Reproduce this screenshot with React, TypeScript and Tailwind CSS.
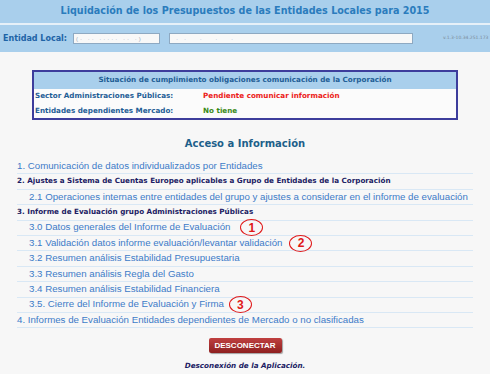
import React from "react";

const verdana = { fontFamily: '"DejaVu Sans", Verdana, sans-serif' };
const arial = { fontFamily: '"Liberation Sans", Arial, sans-serif' };

function Circle({ n, ml }: { n: string; ml: string }) {
  return (
    <span
      className={`inline-flex items-center justify-center w-[23px] h-[17px] rounded-[50%] border-[1.5px] border-[#e01818] text-[#e01818] font-bold text-[12px] leading-none align-middle -my-[2px] ${ml}`}
      style={arial}
    >
      {n}
    </span>
  );
}

type Row = { text: string; kind: "link" | "sub" | "head"; circle?: { n: string; ml: string } };

const rows: Row[] = [
  { text: "1. Comunicación de datos individualizados por Entidades", kind: "link" },
  { text: "2. Ajustes a Sistema de Cuentas Europeo aplicables a Grupo de Entidades de la Corporación", kind: "head" },
  { text: "2.1 Operaciones internas entre entidades del grupo y ajustes a considerar en el informe de evaluación", kind: "sub" },
  { text: "3. Informe de Evaluación grupo Administraciones Públicas", kind: "head" },
  { text: "3.0 Datos generales del Informe de Evaluación", kind: "sub", circle: { n: "1", ml: "ml-[10px]" } },
  { text: "3.1 Validación datos informe evaluación/levantar validación", kind: "sub", circle: { n: "2", ml: "ml-[7px]" } },
  { text: "3.2 Resumen análisis Estabilidad Presupuestaria", kind: "sub" },
  { text: "3.3 Resumen análisis Regla del Gasto", kind: "sub" },
  { text: "3.4 Resumen análisis Estabilidad Financiera", kind: "sub" },
  { text: "3.5. Cierre del Informe de Evaluación y Firma", kind: "sub", circle: { n: "3", ml: "ml-[5px]" } },
  { text: "4. Informes de Evaluación Entidades dependientes de Mercado o no clasificadas", kind: "link" },
];

export default function App() {
  return (
    <div className="w-[490px] h-[374px] bg-[#f7f7f7] overflow-hidden relative">
      <div className="h-[23px] bg-[#a9cfec] flex items-center justify-center">
        <span className="text-[#2b7cbd] font-bold text-[9.6px]" style={verdana}>
          Liquidación de los Presupuestos de las Entidades Locales para 2015
        </span>
      </div>
      <div className="h-[2px] bg-[#e6f0f8]" />
      <div className="h-[27px] bg-[#a9cfec] flex items-center pl-[3px]">
        <span className="text-[#1d63a6] font-bold text-[8px] w-[70px]" style={verdana}>
          Entidad Local:
        </span>
        <div className="w-[87px] h-[11px] bg-[#f8f8f8] border border-[#8ea9c2] flex items-center px-[2px] overflow-hidden">
          <span className="text-[6px] text-[#9ab] tracking-[2px] leading-none" style={arial}>
            (· ·· ····· ·· ·)
          </span>
        </div>
        <div className="ml-[9px] w-[244px] h-[11px] bg-[#f8f8f8] border border-[#8ea9c2] flex items-center px-[6px] overflow-hidden">
          <span className="text-[6px] text-[#8fb0d0] tracking-[6px] leading-none" style={arial}>
            ·· · · ·
          </span>
        </div>
        <span className="ml-[30px] text-[4.5px] text-[#7a8a98] whitespace-nowrap" style={verdana}>
          v.1.3-10.34.251.173
        </span>
      </div>

      <div className="mt-[18px] ml-[32px] w-[426px] h-[50px] border-2 border-[#3d3d9c] bg-[#fbfbfb]" style={verdana}>
        <div className="h-[17px] bg-[#a9cfec] flex items-center justify-center text-[7.2px] font-bold text-[#1f5e96]">
          Situación de cumplimiento obligaciones comunicación de la Corporación
        </div>
        <div className="h-[15px] flex items-center pl-[1px] text-[7.2px] font-bold">
          <span className="w-[168px] text-[#1f5e96]">Sector Administraciones Públicas:</span>
          <span className="text-[#ec2018]">Pendiente comunicar información</span>
        </div>
        <div className="h-[15px] flex items-center pl-[1px] text-[7.2px] font-bold">
          <span className="w-[168px] text-[#1f5e96]">Entidades dependientes Mercado:</span>
          <span className="text-[#3a8a18]">No tiene</span>
        </div>
      </div>

      <div className="mt-[16px] h-[14px] flex items-center justify-center">
        <span className="font-bold text-[10px] text-[#1d5f8a]" style={verdana}>
          Acceso a Información
        </span>
      </div>

      <div className="mt-[9px] ml-[17px] w-[456px]">
        {rows.map((r, i) => (
          <div
            key={i}
            className={`h-[15.4px] flex items-center border-b border-[#d9e8f5] whitespace-nowrap ${r.kind === "sub" ? "pl-[12px]" : ""}`}
          >
            {r.kind === "head" ? (
              <span className="font-bold text-[7.2px] text-[#1b1b63]" style={verdana}>
                {r.text}
              </span>
            ) : (
              <span className="text-[9.7px] text-[#3d7bc8]" style={arial}>
                {r.text}
              </span>
            )}
            {r.circle && <Circle n={r.circle.n} ml={r.circle.ml} />}
          </div>
        ))}
      </div>

      <div className="mt-[10px] flex justify-center">
        <div className="relative">
          <div
            className="w-[73px] h-[15px] rounded-[2px] bg-gradient-to-b from-[#c04040] to-[#8e2020] flex items-center justify-center text-white font-bold text-[8px] shadow-[1px_1px_1px_rgba(0,0,0,0.35)]"
            style={arial}
          >
            DESCONECTAR
          </div>
        </div>
      </div>
      <div className="mt-[8px] flex justify-center">
        <span className="font-bold italic text-[7.2px] text-[#1b1b63]" style={verdana}>
          Desconexión de la Aplicación.
        </span>
      </div>
    </div>
  );
}
